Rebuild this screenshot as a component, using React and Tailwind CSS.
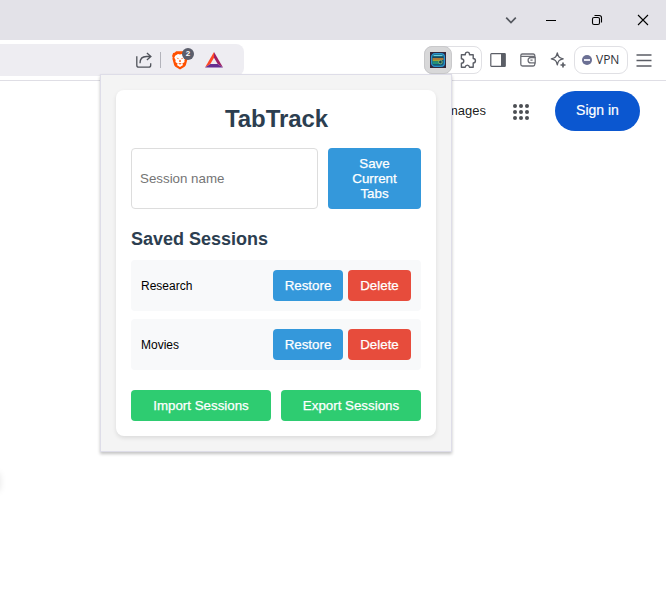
import React from 'react';

function TitleBar() {
  return (
    <div className="flex h-10 items-center justify-end bg-[#e3e2e8] pr-[17px] text-black">
      <svg className="mr-[28px]" width="12" height="12" viewBox="0 0 12 12" fill="none" stroke="#55585f" strokeWidth="1.7">
        <path d="M1.2 3.7 6 8.5l4.8-4.8" />
      </svg>
      <svg className="mr-[34px]" width="12" height="12" viewBox="0 0 12 12" shapeRendering="crispEdges">
        <path d="M1 6h10v1H1z" />
      </svg>
      <svg className="mr-[34px]" width="12" height="12" viewBox="0 0 12 12" fill="none" stroke="#000" strokeWidth="1.1">
        <rect x="1.5" y="3.5" width="7" height="7" rx="1.6" />
        <path d="M3.5 1.5h4.7A2.3 2.3 0 0 1 10.5 3.8v4.7" />
      </svg>
      <svg width="12" height="12" viewBox="0 0 12 12" fill="none" stroke="#000" strokeWidth="1.1">
        <path d="m1 1 10 10M11 1 1 11" />
      </svg>
    </div>
  );
}

function ShieldIcon() {
  return (
    <svg width="18" height="20" viewBox="0 0 18 20">
      <path d="M5.2 1.2h7.6l1.7 1.7 1.4.2 1 3-.6 1.5.3 1.2-1.8 6.4-1.2 1.6L9 19.4l-4.6-2.6-1.2-1.6L1.4 8.8l.3-1.2L1.1 6l1-3 1.4-.2z" fill="#ff5000" />
      <path d="m9 4.4 2-.4 2.8 1.7.9 2-1.3 2.4.1 2-2.3 1.6.9 1.2L9 17l-3.1-2.1.9-1.2-2.3-1.6.1-2-1.3-2.4.9-2L7 4z" fill="#fff" />
      <path d="m5.4 7.6 2.4.9-.6.8zM12.6 7.6l-2.4.9.6.8zM8.6 9.8h.8l.6 1.7-1 .6-1-.6zM7.2 13.7 9 13l1.8.7L9 14.4z" fill="#ff5000" />
    </svg>
  );
}

function Toolbar() {
  return (
    <div className="flex h-[41px] border-b border-[#dfdee5] bg-white">
      <div className="mt-1 flex h-8 w-[244px] items-center rounded-r-lg bg-[#eeedf2] pl-[135px]">
        <svg width="18" height="18" viewBox="0 0 18 18" fill="none" stroke="#4f525a" strokeWidth="1.3">
          <path d="M1.8 5.2v9c0 1.3.7 2 2 2h9.9c1.3 0 2-.7 2-2v-2" />
          <path d="M5 12.2c0-4 2.3-6.7 6.4-6.7h4.4M11.9 1.9l4 3.6-4 3.6" />
        </svg>
        <span className="ml-[7px] h-4 w-px bg-[#b3b3bb]" />
        <div className="relative ml-[10px]">
          <ShieldIcon />
          <span className="absolute -top-[2px] left-[11px] flex h-3 w-3 items-center justify-center rounded-full bg-[#5b5e6b] font-['Liberation_Sans',sans-serif] text-[8px] font-bold leading-none text-white">2</span>
        </div>
        <svg className="ml-4" width="18" height="16" viewBox="0 0 18 16">
          <path d="M9 0 0 15.5 5.3 12 9 5.7z" fill="#ff4724" />
          <path d="M9 0v5.7l3.7 6.3 5.3 3.5z" fill="#9e1f63" />
          <path d="M0 15.5 5.3 12h7.4l5.3 3.5z" fill="#662d91" />
        </svg>
      </div>
      <div className="ml-[180px] mt-[6px] flex h-7 w-[58px] rounded-lg border border-[#e0e0e4]">
        <div className="-ml-px -mt-px flex h-7 w-7 items-center justify-center rounded-lg border border-[#c9c9cb] bg-[#d8d8d9]">
          <svg width="16" height="16" viewBox="0 0 16 16">
            <rect width="16" height="16" fill="#33263a" />
            <rect x="1.6" y="1.6" width="12.8" height="12.8" rx="3.4" fill="#155a75" stroke="#2a93cf" strokeWidth="1.3" />
            <path d="M3.5 3.5h9" stroke="#6bd0dc" strokeWidth="1.2" />
            <path d="M2.6 5.4h10.8" stroke="#1c4658" strokeWidth="1" />
            <path d="M2.6 7h10.8" stroke="#d9822b" strokeWidth="1.6" />
            <path d="M2.6 8.6h8" stroke="#a3a832" strokeWidth="1.4" />
            <path d="M2.6 10.7h9.5" stroke="#23927a" strokeWidth="2.6" />
            <circle cx="10.4" cy="10" r="1.8" fill="#123f50" stroke="#86b770" strokeWidth=".9" />
          </svg>
        </div>
        <svg className="ml-[7px] mt-[4px]" width="18" height="18" viewBox="0 0 18 18" fill="none" stroke="#5b5e66" strokeWidth="1.4" strokeLinejoin="round">
          <path d="M2.4 3.8h3.9c-.5-3.6 4.7-3.6 4.2 0h3.7v3.7c3 .1 3 4.3 0 4.4v4.3h-3.7c-.4-2.8-3.9-2.8-4.3 0H2.4v-3.9c3.2-.2 3.2-4.3 0-4.6z" />
        </svg>
      </div>
      <div className="ml-2 mt-[12px] flex h-4 gap-[14px]">
        <svg width="16" height="16" viewBox="0 0 16 16" fill="none" stroke="#5b5e66" strokeWidth="1.2">
          <rect x=".8" y="1.6" width="14.4" height="12.8" rx=".7" />
          <path d="M11 1.5h4.3v13H11z" fill="#5b5e66" stroke="none" />
        </svg>
        <svg width="16" height="16" viewBox="0 0 16 16" fill="none" stroke="#6c6e75" strokeWidth="1.3">
          <path d="M14.8 5.5V3.6c0-1-.6-1.6-1.6-1.6H2.4C1.4 2 .8 2.6.8 3.6v8.6c0 1.1.6 1.8 1.7 1.8h10.7c1 0 1.6-.6 1.6-1.7v-1.2M.8 4.4h14" />
          <path d="M15.2 5.5h-4.4a2.7 2.7 0 0 0 0 5.4h4.4zM10.4 8.2h2.2" />
        </svg>
        <svg width="16" height="16" viewBox="0 0 16 16" fill="none" stroke="#5b5e66" strokeWidth="1.3" strokeLinejoin="round">
          <path d="M7.3.9c.9 4 1.9 5 5.9 5.9-4 .9-5 2-5.9 6.1-.9-4.1-1.9-5.2-6-6.1 4.1-.9 5.1-1.9 6-5.9z" />
          <path d="M13 10.5v5M10.5 13h5" strokeWidth="1.7" />
        </svg>
      </div>
      <div className="ml-2 mt-[6px] flex h-7 w-[54px] items-center rounded-[9px] border border-[#e0e0e4] pl-[7px]">
        <span className="flex h-[10px] w-[10px] items-center justify-center rounded-full bg-[#6b7094]">
          <span className="h-[2px] w-[6px] bg-[#e8e8f2]" />
        </span>
        <span className="ml-1 font-['Open_Sans',sans-serif] text-[12px] leading-4 text-[#303138]">VPN</span>
      </div>
      <svg className="ml-2 mt-3" width="16" height="16" viewBox="0 0 16 16" fill="none" stroke="#5b5e66" strokeWidth="1.3">
        <path d="M.5 3h15M.5 8.5h15M.5 14h15" />
      </svg>
    </div>
  );
}

function PageHeader() {
  return (
    <div className="flex items-center justify-end pr-[26px] pt-[10px]">
      <span className="text-[13px] leading-4 text-black/90">Images</span>
      <svg className="ml-[27px] mt-[2px]" width="16" height="16" viewBox="0 0 16 16" fill="#4c4f53">
        {[2, 8, 14].map((y) => [2, 8, 14].map((x) => <circle key={x + '-' + y} cx={x} cy={y} r="2" />))}
      </svg>
      <button className="ml-[26px] h-10 w-[85px] rounded-full bg-[#0b57d0] pb-[2px] text-[14px] font-normal text-white [-webkit-text-stroke:0.2px_white]">Sign in</button>
    </div>
  );
}

function SessionRow({ name }) {
  return (
    <div className="flex h-[51px] items-center gap-[5px] rounded-[4px] bg-[#f8f9fa] px-[10px] text-[13.333px]">
      <span className="flex-1 text-[12px] text-black">{name}</span>
      <button className="h-[31px] w-[70px] rounded-[4px] bg-[#3498db] text-white [-webkit-text-stroke:0.25px_white]">Restore</button>
      <button className="h-[31px] w-[63px] rounded-[4px] bg-[#e74c3c] text-white [-webkit-text-stroke:0.25px_white]">Delete</button>
    </div>
  );
}

function Popup() {
  return (
    <div className="absolute left-[100px] top-[74px] w-[352px] border border-[#dedde8] bg-[#f4f4f4] p-[15px] shadow-[0_2px_3px_rgba(0,0,0,0.24)]">
      <div className="h-[346px] rounded-lg bg-white px-[15px] pt-[15px] shadow-[0_2px_4px_rgba(0,0,0,0.1)]">
        <h1 className="pl-px text-center text-[24px] font-bold leading-7 tracking-[-0.1px] text-[#2c3e50]">TabTrack</h1>
        <div className="mt-[15px] flex h-[61px] gap-[10px]">
          <input className="w-[187px] rounded-[4px] border border-[#dddddd] px-2 text-[13.333px] placeholder:text-[#757575] outline-none" placeholder="Session name" />
          <button className="w-[93px] rounded-[4px] bg-[#3498db] px-5 text-[13.333px] leading-[15px] text-white [-webkit-text-stroke:0.25px_white]">Save Current Tabs</button>
        </div>
        <h2 className="mt-5 text-[18px] font-bold leading-5 text-[#2c3e50]">Saved Sessions</h2>
        <div className="mt-[11px] flex flex-col gap-2">
          <SessionRow name="Research" />
          <SessionRow name="Movies" />
        </div>
        <div className="mt-5 flex gap-[10px] text-[13.333px] text-white [-webkit-text-stroke:0.25px_white]">
          <button className="h-[31px] flex-1 rounded-[4px] bg-[#2ecc71]">Import Sessions</button>
          <button className="h-[31px] flex-1 rounded-[4px] bg-[#2ecc71]">Export Sessions</button>
        </div>
      </div>
    </div>
  );
}

export default function App() {
  return (
    <div className="relative h-[609px] w-[666px] overflow-hidden bg-white font-['Liberation_Sans',Arial,sans-serif]">
      <TitleBar />
      <Toolbar />
      <PageHeader />
      <Popup />
      <div className="absolute -left-[10px] top-[472px] h-[20px] w-[10px] rounded-full shadow-[0_0_7px_rgba(0,0,0,0.1)]" />
    </div>
  );
}
